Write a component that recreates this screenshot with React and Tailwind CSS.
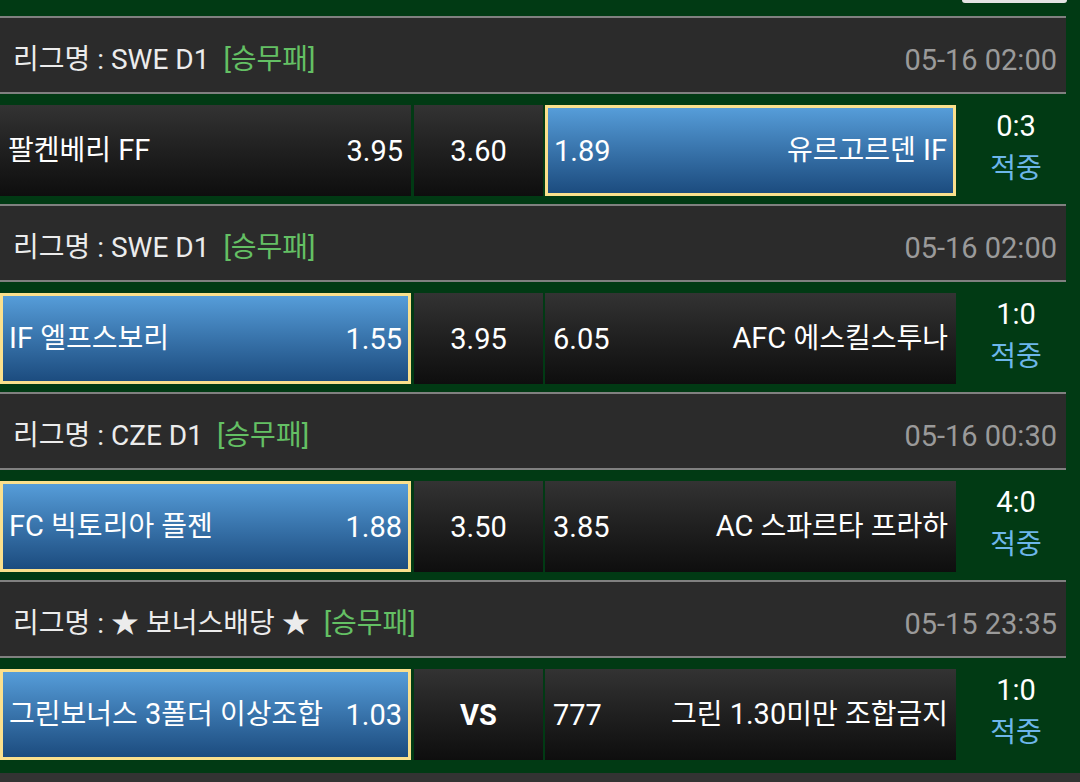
import React from "react";

const matches = [
    {
        league: "SWE D1",
        time: "05-16 02:00",
        home: "팔켄베리 FF",
        homeOdds: "3.95",
        draw: "3.60",
        awayOdds: "1.89",
        away: "유르고르덴 IF",
        pick: "away",
        score: "0:3",
    },
    {
        league: "SWE D1",
        time: "05-16 02:00",
        home: "IF 엘프스보리",
        homeOdds: "1.55",
        draw: "3.95",
        awayOdds: "6.05",
        away: "AFC 에스킬스투나",
        pick: "home",
        score: "1:0",
    },
    {
        league: "CZE D1",
        time: "05-16 00:30",
        home: "FC 빅토리아 플젠",
        homeOdds: "1.88",
        draw: "3.50",
        awayOdds: "3.85",
        away: "AC 스파르타 프라하",
        pick: "home",
        score: "4:0",
    },
    {
        league: "★ 보너스배당 ★",
        time: "05-15 23:35",
        home: "그린보너스 3폴더 이상조합",
        homeOdds: "1.03",
        draw: "VS",
        awayOdds: "777",
        away: "그린 1.30미만 조합금지",
        pick: "home",
        score: "1:0",
    },
];

// 한글은 조금 작게 (안드로이드 폰트 비율 맞추기)
const Txt = ({t}) => t.split(/([가-힣]+)/).map((s, i) =>
    /[가-힣]/.test(s) ? <span key={i} className="text-[28px]">{s}</span> : s
);

const cellBase = "h-full flex items-center justify-between whitespace-nowrap";
const dark = "bg-linear-to-b from-[#333333] to-[#0e0e0e] px-[8px]";
const blue = "bg-linear-to-b from-[#569dd9] to-[#1c4c7f] border-[3px] border-[#fbe08d] px-[6px]";

const MatchBlock = ({m}) => {
    return (
        <div>
            <div className="h-[78px] mr-[14px] border-y-2 border-[#808080] bg-[#2b2b2b] flex items-center justify-between pt-[9px] pl-[13px] pr-[9px]">
                <div className="text-[#ececec] text-[28px]">
                    리그명 : {m.league}
                    <span className="ml-[14px] text-[#64c064]">[승무패]</span>
                </div>
                <div className="text-[#9a9a9a]">{m.time}</div>
            </div>

            <div className="flex h-[91px] mt-[11px] mb-[8px] text-white">
                <div className={`w-[411px] ${cellBase} ${m.pick === "home" ? blue : dark}`}>
                    <span><Txt t={m.home}/></span>
                    <span>{m.homeOdds}</span>
                </div>
                <div className={`w-[129px] ml-[3px] h-full flex items-center justify-center bg-linear-to-b from-[#333333] to-[#0e0e0e] ${m.draw === "VS" ? "font-bold" : ""}`}>
                    {m.draw}
                </div>
                <div className={`w-[411px] ml-[2px] ${cellBase} ${m.pick === "away" ? blue : dark}`}>
                    <span>{m.awayOdds}</span>
                    <span><Txt t={m.away}/></span>
                </div>
                <div className="w-[120px] h-full flex flex-col items-center justify-center pb-[6px]">
                    <div className="h-[43px] flex items-center">{m.score}</div>
                    <div className="h-[43px] flex items-center text-[#6db6ea]"><Txt t="적중"/></div>
                </div>
            </div>
        </div>
    )
}

const App = () => {
    return (
        <div className="w-[1080px] h-[782px] overflow-hidden bg-[#013a14] font-[Roboto,'Noto_Sans_CJK_KR',sans-serif] text-[29px] leading-[34px]">
            <div className="h-[16px] flex justify-end pr-[13px]">
                <div className="w-[105px] h-[3px] rounded-b-[4px] bg-[#e4e4e4]"></div>
            </div>
            {matches.map((m, i) => <MatchBlock key={i} m={m}/>)}
            <div className="h-[5px]"></div>
            <div className="h-[20px] bg-[#333333]"></div>
        </div>
    )
}

export default App;
